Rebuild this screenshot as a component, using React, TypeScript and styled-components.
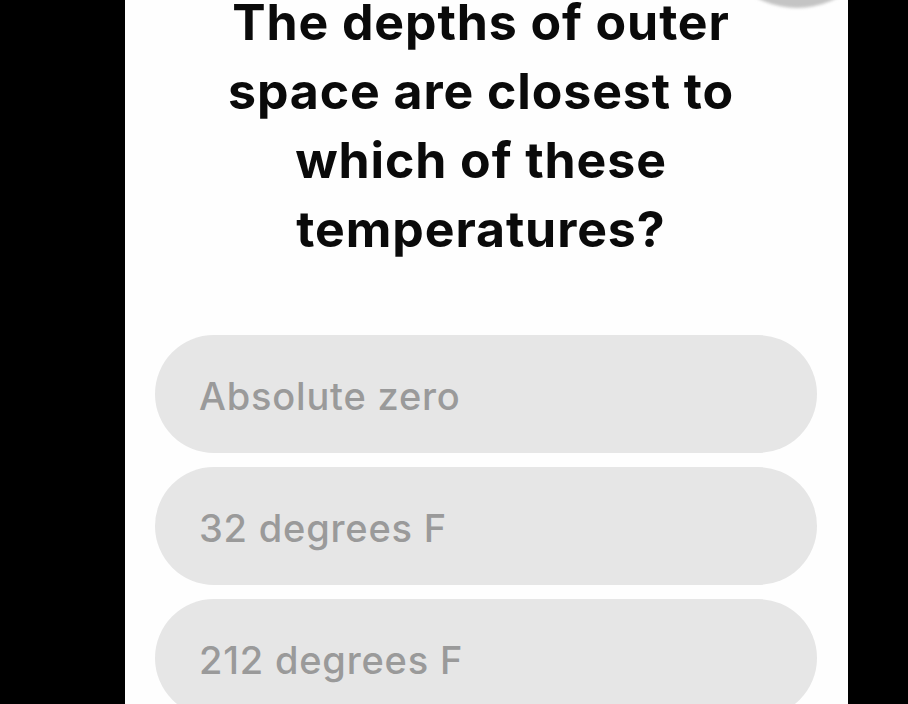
import React from "react";
import styled, { createGlobalStyle } from "styled-components";

const GlobalStyle = createGlobalStyle`
  html, body {
    margin: 0;
    padding: 0;
    background: #000;
    overflow: hidden;
  }
`;

const Screen = styled.div`
  width: 908px;
  height: 704px;
  background: #000;
  display: flex;
  justify-content: flex-start;
  overflow: hidden;
`;

const Panel = styled.div`
  position: relative;
  margin-left: 125px;
  width: 723px;
  height: 704px;
  background: #fefefe;
  overflow: hidden;
  display: flex;
  flex-direction: column;
  align-items: center;
  padding: 0 31px 0 30px;
  box-sizing: border-box;
`;

const CloseBubble = styled.div`
  position: absolute;
  top: -162px;
  left: 587px;
  width: 170px;
  height: 170px;
  border-radius: 50%;
  background: #c4c4c4;
  filter: blur(1.5px);
`;

const Question = styled.h1`
  margin: -12px 10px 0 0;
  width: 560px;
  font-family: Inter, "Liberation Sans", sans-serif;
  font-weight: 700;
  font-size: 50px;
  line-height: 69px;
  letter-spacing: 0.9px;
  text-align: center;
  color: #0a0a0a;
`;

const Options = styled.div`
  margin-top: 71px;
  width: 100%;
  display: flex;
  flex-direction: column;
  gap: 14px;
`;

const Option = styled.div`
  height: 118px;
  border-radius: 59px;
  background: #e6e6e6;
  display: flex;
  align-items: center;
  padding-left: 44px;
  padding-top: 4px;
  box-sizing: border-box;
  flex-shrink: 0;
  font-family: Inter, "Liberation Sans", sans-serif;
  font-weight: 500;
  font-size: 38px;
  letter-spacing: 0.8px;
  color: #9a9a9a;
`;

const options = ["Absolute zero", "32 degrees F", "212 degrees F"];

export default function App() {
  return (
    <>
      <GlobalStyle />
      <Screen>
        <Panel>
          <CloseBubble />
          <Question>
            The depths of outer space are closest to which of these
            temperatures?
          </Question>
          <Options>
            {options.map((o) => (
              <Option key={o}>{o}</Option>
            ))}
          </Options>
        </Panel>
      </Screen>
    </>
  );
}
